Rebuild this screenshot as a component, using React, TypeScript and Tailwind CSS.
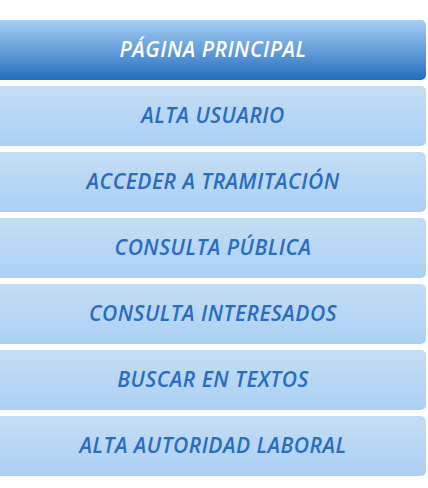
import React from "react";

const items = [
  "PÁGINA PRINCIPAL",
  "ALTA USUARIO",
  "ACCEDER A TRAMITACIÓN",
  "CONSULTA PÚBLICA",
  "CONSULTA INTERESADOS",
  "BUSCAR EN TEXTOS",
  "ALTA AUTORIDAD LABORAL",
];

export default function App() {
  return (
    <div className="w-[428px] h-[488px] bg-white pt-[20px]">
      <ul className="w-[426px] flex flex-col gap-[6px]">
        {items.map((t, i) => (
          <li key={t}>
            <a
              href="#"
              className={
                i === 0
                  ? "flex h-[60px] items-center justify-center rounded-r-[5px] bg-gradient-to-b from-[#a6cff3] to-[#1e6dbf] text-white italic font-semibold text-[21px] tracking-[0.5px]"
                  : "flex h-[60px] items-center justify-center rounded-r-[5px] bg-gradient-to-b from-[#c4ddf3] to-[#abd0f5] text-[#2a6cbf] italic font-semibold text-[21px] tracking-[0.5px]"
              }
              style={{ fontFamily: '"Open Sans", sans-serif' }}
            >
              {t}
            </a>
          </li>
        ))}
      </ul>
    </div>
  );
}
